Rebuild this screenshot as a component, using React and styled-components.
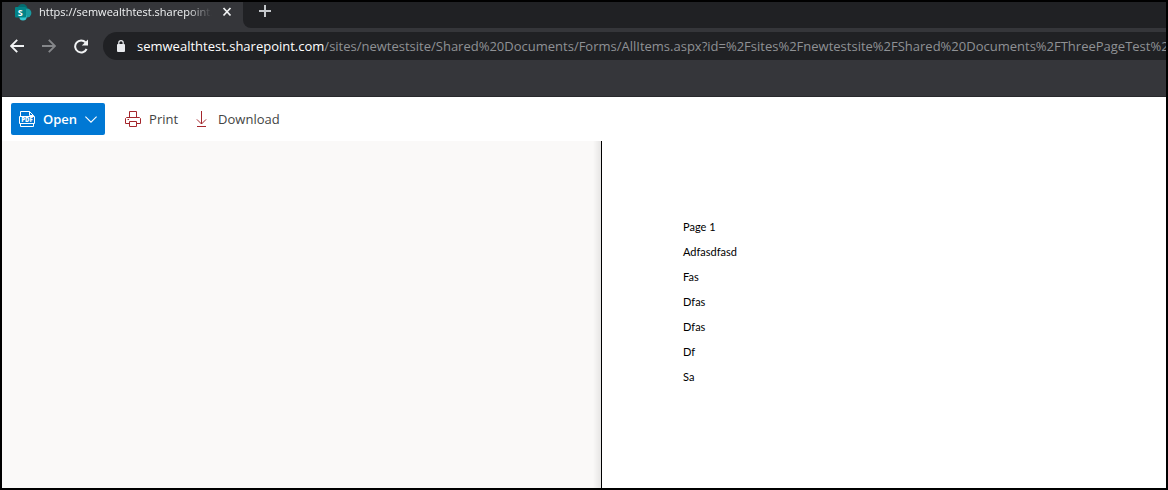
import React from 'react'
import styled, { createGlobalStyle } from 'styled-components'

const lines = ['Page 1', 'Adfasdfasd', 'Fas', 'Dfas', 'Dfas', 'Df', 'Sa']

export default function App() {
    return (
        <Frame>
            <Global_Style />
            <Tab_Strip>
                <Tab>
                    <Sharepoint_Icon />
                    <Tab_Title>https://semwealthtest.sharepoint.com</Tab_Title>
                    <Close_Button aria-label="Close tab">
                        <svg width="10" height="10" viewBox="0 0 10 10" stroke="#f1f3f4" strokeWidth="1.7">
                            <path d="M1.5 1L8.5 8.5M8.5 1L1.5 8.5" />
                        </svg>
                    </Close_Button>
                </Tab>
                <Strip_Rest>
                    <New_Tab_Button aria-label="New tab">
                        <svg width="12" height="12" viewBox="0 0 12 12" stroke="#c4c7cb" strokeWidth="2">
                            <path d="M6 0V12M0 6H12" />
                        </svg>
                    </New_Tab_Button>
                </Strip_Rest>
            </Tab_Strip>
            <Nav_Bar>
                <Nav_Buttons>
                    <Nav_Button aria-label="Back">
                        <Arrow_Icon color="#f1f3f4" />
                    </Nav_Button>
                    <Nav_Button aria-label="Forward" disabled>
                        <Arrow_Icon color="#85878a" flip />
                    </Nav_Button>
                    <Nav_Button aria-label="Reload">
                        <svg width="15" height="15" viewBox="0 0 15 15" fill="none">
                            <path d="M12.6 10A6 6 0 1 1 11.6 3.4" stroke="#f1f3f4" strokeWidth="2" />
                            <path d="M14 0.4V6.6H7.8Z" fill="#f1f3f4" />
                        </svg>
                    </Nav_Button>
                </Nav_Buttons>
                <Address_Bar>
                    <svg width="8" height="12" viewBox="0 0 8 12" fill="none">
                        <rect x="0" y="4" width="8" height="8" rx="1" fill="#e8eaed" />
                        <path d="M1.8 4.5V2.8a2.2 2.2 0 0 1 4.4 0V4.5" stroke="#e8eaed" strokeWidth="1.2" />
                    </svg>
                    <Url role="textbox" aria-label="Address" tabIndex={0}>
                        <Host>semwealthtest.sharepoint.com</Host>
                        /sites/newtestsite/Shared%20Documents/Forms/AllItems.aspx?id=%2Fsites%2Fnewtestsite%2FShared%20Documents%2FThreePageTest%2Epdf
                    </Url>
                </Address_Bar>
            </Nav_Bar>
            <Bookmarks_Bar />
            <Command_Bar>
                <Open_Button>
                    <Pdf_Icon />
                    <span>Open</span>
                    <svg width="12" height="7" viewBox="0 0 12 7" fill="none" stroke="#fff" strokeWidth="1.1">
                        <path d="M0.4 0.6L6 6.2L11.6 0.6" />
                    </svg>
                </Open_Button>
                <Command_Button>
                    <Print_Icon />
                    <span>Print</span>
                </Command_Button>
                <Command_Button>
                    <Download_Icon />
                    <span>Download</span>
                </Command_Button>
            </Command_Bar>
            <Viewer>
                <Backdrop />
                <Page>
                    {lines.map((line, i) => <Line key={i}>{line}</Line>)}
                </Page>
            </Viewer>
        </Frame>
    )
}

function Sharepoint_Icon() {
    return (
        <svg width="17" height="17" viewBox="0 0 17 17">
            <circle cx="7.5" cy="5" r="5" fill="#036c70" />
            <circle cx="11.8" cy="9" r="4.6" fill="#1a9ba1" />
            <circle cx="8" cy="13" r="3.6" fill="#37c6d0" />
            <rect x="0" y="3" width="11" height="10.5" rx="1" fill="#038387" />
            <text x="5.2" y="11.5" textAnchor="middle" fontSize="9" fontWeight="700" fill="#fff">S</text>
        </svg>
    )
}

function Arrow_Icon({ color, flip }) {
    return (
        <svg width="14" height="14" viewBox="0 0 14 14" fill="none" stroke={color} strokeWidth="1.9">
            <path d={flip ? 'M0 7H13M6.8 0.8L13 7L6.8 13.2' : 'M14 7H1M7.2 0.8L1 7L7.2 13.2'} />
        </svg>
    )
}

function Pdf_Icon() {
    return (
        <svg width="16" height="16" viewBox="0 0 16 16" fill="none" stroke="#fff">
            <path d="M1.5 5V0.5H10.5L14.5 4.5V5M10.5 0.5V4.5H14.5M1.5 12V15.5H14.5V12" />
            <path d="M0.5 5.5H15.5V12.5H0.5Z" />
            <text x="8" y="11.3" textAnchor="middle" fontSize="6" fontWeight="800" fill="#fff" stroke="none">PDF</text>
        </svg>
    )
}

function Print_Icon() {
    return (
        <svg width="16" height="16" viewBox="0 0 16 16" fill="none" stroke="#a4262c">
            <path d="M4.5 6.5V0.5H11.5V6.5" />
            <path d="M4.5 12.5H0.5V7.5L1.5 6.5H14.5L15.5 7.5V12.5H11.5" />
            <path d="M4.5 10.5H11.5V15.5H4.5ZM2.5 8.5H4" />
        </svg>
    )
}

function Download_Icon() {
    return (
        <svg width="16" height="16" viewBox="-2 0 16 16" fill="none" stroke="#a4262c">
            <path d="M5.5 0V13M0.9 8.4L5.5 13L10.1 8.4M1 15.5H10" />
        </svg>
    )
}

const Global_Style = createGlobalStyle`
    * {
        box-sizing: border-box;
    }

    body {
        margin: 0;
        background: #fff;
        font-family: "Open Sans", "Noto Sans", sans-serif;
    }

    button {
        display: flex;
        align-items: center;
        padding: 0;
        border: 0;
        background: none;
        font: inherit;
    }

    svg {
        flex: none;
        display: block;
    }
`

const Frame = styled.div`
    display: flex;
    flex-direction: column;
    min-height: 100vh;
    border: 2px solid #000;
`

const Tab_Strip = styled.div`
    display: flex;
    height: 26px;
    background: #35363a;
`

const Tab = styled.div`
    display: flex;
    align-items: center;
    width: 241px;
    padding: 0 11px 6px 13px;
`

const Tab_Title = styled.div`
    flex: 1;
    min-width: 0;
    margin: 0 10px 0 7px;
    overflow: hidden;
    white-space: nowrap;
    font-size: 11px;
    line-height: 18px;
    color: #f1f3f4;
    mask-image: linear-gradient(to right, #000 86%, transparent);
`

const Close_Button = styled.button`
    height: 16px;
`

const Strip_Rest = styled.div`
    flex: 1;
    background: #202124;
    border-bottom-left-radius: 8px;
`

const New_Tab_Button = styled.button`
    padding: 3px 16px;
`

const Nav_Bar = styled.div`
    display: flex;
    align-items: center;
    padding: 4px 0 4px 8px;
    background: #35363a;
`

const Nav_Buttons = styled.div`
    display: flex;
    gap: 18px;
    margin-right: 14px;
`

const Nav_Button = styled.button`
    height: 28px;
`

const Address_Bar = styled.div`
    display: flex;
    flex: 1;
    align-items: center;
    gap: 12px;
    min-width: 0;
    height: 28px;
    padding-left: 14px;
    overflow: hidden;
    background: #202124;
    border-radius: 14px 0 0 14px;
`

const Url = styled.div`
    white-space: nowrap;
    font-size: 13px;
    line-height: 20px;
    color: #8f9195;
`

const Host = styled.span`
    color: #fff;
`

const Bookmarks_Bar = styled.div`
    height: 33px;
    background: #35363a;
    border-bottom: 1px solid #28292c;
`

const Command_Bar = styled.div`
    display: flex;
    align-items: center;
    gap: 16px;
    padding: 6px 9px;
    font-size: 13px;
    line-height: 20px;
    color: #444;
`

const Command_Button = styled.button`
    gap: 8px;
    height: 32px;
    color: inherit;
`

const Open_Button = styled(Command_Button)`
    margin-right: 4px;
    padding: 0 8px;
    background: #0078d4;
    border-radius: 2px;
    font-weight: 600;
    color: #fff;
`

const Viewer = styled.div`
    display: flex;
    flex: 1;
`

const Backdrop = styled.div`
    width: 599px;
    background: linear-gradient(to left, #e6e5e4, #faf9f8 8px);
`

const Page = styled.div`
    flex: 1;
    padding: 78px 81px;
    border-left: 1px solid #000;
    background: #fff;
`

const Line = styled.p`
    margin: 0 0 9px;
    font-family: Lato, sans-serif;
    font-size: 11px;
    line-height: 16px;
    color: #000;
`
